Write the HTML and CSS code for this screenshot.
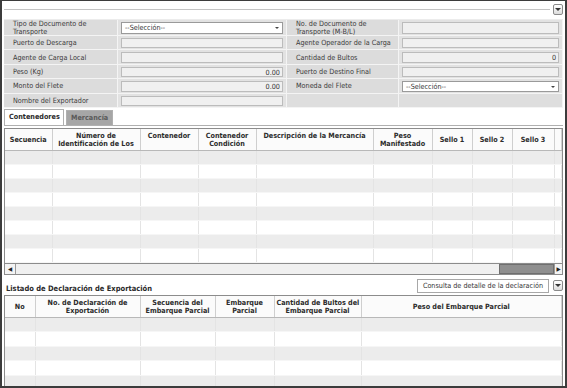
FILE: index.html
```html
<!DOCTYPE html>
<html lang="es">
<head>
    <meta charset="UTF-8">
    <title>Documento de Transporte</title>
    <link rel="stylesheet" href="styles.css">
</head>
<body>
    <div class="page">
        <div class="top-bar">
            <div class="rule"></div>
            <button class="toggle"><span class="chev"></span></button>
        </div>

        <div class="form-grid">
            <div class="label two-line">Tipo de Documento de<br>Transporte</div>
            <div class="field"><div class="select">--Selección--<span class="arrow"></span></div></div>
            <div class="label two-line">No. de Documento de<br>Transporte (M-B/L)</div>
            <div class="field"><div class="input"></div></div>

            <div class="label">Puerto de Descarga</div>
            <div class="field"><div class="input"></div></div>
            <div class="label">Agente Operador de la Carga</div>
            <div class="field"><div class="input"></div></div>

            <div class="label">Agente de Carga Local</div>
            <div class="field"><div class="input"></div></div>
            <div class="label">Cantidad de Bultos</div>
            <div class="field"><div class="input num">0</div></div>

            <div class="label">Peso (Kg)</div>
            <div class="field"><div class="input num">0.00</div></div>
            <div class="label">Puerto de Destino Final</div>
            <div class="field"><div class="input"></div></div>

            <div class="label">Monto del Flete</div>
            <div class="field"><div class="input num">0.00</div></div>
            <div class="label">Moneda del Flete</div>
            <div class="field"><div class="select">--Selección--<span class="arrow"></span></div></div>

            <div class="label">Nombre del Exportador</div>
            <div class="field"><div class="input"></div></div>
            <div class="label blank"></div>
            <div class="field blank"></div>
        </div>

        <div class="tabs">
            <div class="tab active">Contenedores</div>
            <div class="tab">Mercancía</div>
        </div>

        <div class="grid-box">
            <table class="grid">
                <colgroup>
                    <col style="width:47px"><col style="width:88px"><col style="width:58px">
                    <col style="width:58px"><col style="width:117px"><col style="width:59px">
                    <col style="width:40px"><col style="width:40px"><col style="width:42px"><col>
                </colgroup>
                <thead>
                    <tr>
                        <th>Secuencia</th>
                        <th>Número de<br>Identificación de Los</th>
                        <th class="top">Contenedor</th>
                        <th class="top">Contenedor<br>Condición</th>
                        <th class="top">Descripción de la Mercancía</th>
                        <th>Peso<br>Manifestado</th>
                        <th>Sello 1</th>
                        <th>Sello 2</th>
                        <th>Sello 3</th>
                        <th></th>
                    </tr>
                </thead>
                <tbody id="rows1"></tbody>
            </table>
            <div class="hscroll">
                <div class="sb-btn">&#9664;</div>
                <div class="sb-track"><div class="sb-thumb"></div></div>
                <div class="sb-btn">&#9654;</div>
            </div>
        </div>

        <div class="section-head">
            <div class="section-title">Listado de Declaración de Exportación</div>
            <button class="btn">Consulta de detalle de la declaración</button>
            <button class="toggle"><span class="chev"></span></button>
        </div>

        <div class="grid-box bottom">
            <table class="grid">
                <colgroup>
                    <col style="width:30px"><col style="width:105px"><col style="width:75px">
                    <col style="width:59px"><col style="width:87px"><col>
                </colgroup>
                <thead>
                    <tr>
                        <th>No</th>
                        <th class="top">No. de Declaración de<br>Exportación</th>
                        <th class="top">Secuencia del<br>Embarque Parcial</th>
                        <th class="top">Embarque<br>Parcial</th>
                        <th class="top">Cantidad de Bultos del<br>Embarque Parcial</th>
                        <th>Peso del Embarque Parcial</th>
                    </tr>
                </thead>
                <tbody id="rows2"></tbody>
            </table>
        </div>
    </div>

    <script>
        function fillRows(id, rows, cols) {
            const body = document.getElementById(id);
            for (let r = 0; r < rows; r++) {
                const tr = document.createElement('tr');
                for (let c = 0; c < cols; c++) {
                    tr.appendChild(document.createElement('td'));
                }
                body.appendChild(tr);
            }
        }
        fillRows('rows1', 8, 10);
        fillRows('rows2', 5, 6);
    </script>
</body>
</html>
```

FILE: styles.css
```css
* {
    box-sizing: border-box;
}

body {
    margin: 0;
    background: #ffffff;
    font-family: "DejaVu Sans Condensed", "DejaVu Sans", sans-serif;
    font-stretch: condensed;
    font-size: 7.2px;
    color: #333;
}

.page {
    width: 567px;
    height: 388px;
    border: 2px solid #3c3c3c;
    border-top-width: 1px;
    padding: 0 2px;
    overflow: hidden;
}

.top-bar {
    display: flex;
    align-items: center;
    height: 16px;
    padding-top: 1px;
}

.rule {
    flex: 1;
    height: 1px;
    background: #c4c4c4;
    margin-right: 3px;
}

.toggle {
    width: 10px;
    height: 11px;
    padding: 0;
    border: 1px solid #8a8a8a;
    border-radius: 2px;
    background: linear-gradient(#ffffff, #dcdcdc);
    display: flex;
    align-items: center;
    justify-content: center;
}

.chev {
    width: 0;
    height: 0;
    border-left: 3px solid transparent;
    border-right: 3px solid transparent;
    border-top: 3px solid #333;
}

/* form */
.form-grid {
    display: grid;
    grid-template-columns: 114px 169px 112px 164px;
    grid-template-rows: 16px;
    grid-auto-rows: 14.4px;
    margin-top: 2px;
    background: #d6d6d6;
    border-top: 1px solid #ececec;
}

.label {
    background: #dcdcdc;
    border-bottom: 1px solid #f4f4f4;
    border-right: 1px solid #f4f4f4;
    padding-left: 9px;
    display: flex;
    align-items: center;
    color: #3a3a3a;
    white-space: nowrap;
}

.label.two-line {
    line-height: 8px;
}

.field {
    background: #e2e2e2;
    border-bottom: 1px solid #f4f4f4;
    border-right: 1px solid #f4f4f4;
    padding: 2px 3px 1px 3px;
}

.field.blank, .label.blank {
    background: #dedede;
}

.input {
    height: 100%;
    background: #f0f0f0;
    border: 1px solid #bcbcbc;
    text-align: right;
    padding-right: 2px;
    line-height: 9px;
    color: #333;
}

.select {
    position: relative;
    height: 100%;
    background: #ffffff;
    border: 1px solid #9a9a9a;
    padding-left: 3px;
    line-height: 10px;
    color: #333;
}

.select .arrow {
    position: absolute;
    right: 3px;
    top: 4px;
    border-left: 2px solid transparent;
    border-right: 2px solid transparent;
    border-top: 2px solid #444;
}

/* tabs */
.tabs {
    display: flex;
    gap: 2px;
    margin-top: 1px;
    height: 17px;
    align-items: flex-end;
    border-bottom: 1px solid #b0b0b0;
}

.tab {
    height: 15px;
    padding: 0 4px;
    font-weight: bold;
    line-height: 14px;
    border: 1px solid #b0b0b0;
    border-bottom: none;
    background: #a6a6a6;
    color: #5a5a5a;
}

.tab.active {
    height: 16px;
    width: 60px;
    background: #ffffff;
    color: #2a2a2a;
}

/* grids */
.grid-box {
    margin-top: 2px;
    border: 1px solid #8c8c8c;
    overflow: hidden;
}

.grid {
    width: 100%;
    table-layout: fixed;
    border-collapse: collapse;
}

.grid thead tr {
    height: 22px;
}

.grid th {
    background: #fbfbfb;
    border-right: 1px solid #cfcfcf;
    border-bottom: 1px solid #b8b8b8;
    font-weight: bold;
    color: #2c2c2c;
    line-height: 8px;
    text-align: center;
    vertical-align: middle;
    padding: 0 2px;
    white-space: nowrap;
    overflow: hidden;
}

.grid th.top {
    vertical-align: top;
    padding-top: 3px;
}

.grid tbody tr {
    height: 14px;
}

.grid td {
    padding: 0;
    border-right: 1px solid #e4e4e4;
    border-bottom: 1px solid #f6f6f6;
}

.grid tbody tr:nth-child(odd) td {
    background: #ececec;
}

.grid tbody tr:nth-child(even) td {
    background: #ffffff;
}

.hscroll {
    display: flex;
    height: 11px;
    border-top: 1px solid #8c8c8c;
}

.sb-btn {
    width: 11px;
    font-size: 6px;
    line-height: 10px;
    text-align: center;
    color: #222;
    background: #f4f4f4;
    border-right: 1px solid #9a9a9a;
}

.sb-btn:last-child {
    width: 8px;
    border-right: none;
    border-left: 1px solid #9a9a9a;
}

.sb-track {
    flex: 1;
    display: flex;
    justify-content: flex-end;
    background: #f0f0f0;
}

.sb-thumb {
    width: 55px;
    background: #8f8f8f;
    border: 1px solid #6f6f6f;
}

.section-head {
    display: flex;
    align-items: center;
    gap: 4px;
    margin-top: 3px;
    height: 15px;
}

.section-title {
    flex: 1;
    padding-left: 2px;
    padding-top: 5px;
    font-weight: bold;
    font-size: 7.5px;
    color: #2a2a2a;
}

.btn {
    height: 14px;
    padding: 0 5px;
    font-family: inherit;
    font-stretch: condensed;
    font-size: 7.2px;
    color: #333;
    background: #ffffff;
    border: 1px solid #a8a8a8;
}

.grid-box.bottom {
    margin-top: 2px;
    border-bottom: none;
}

.grid-box.bottom thead tr {
    height: 21px;
}

.grid-box.bottom tbody tr {
    height: 14.4px;
}
```
